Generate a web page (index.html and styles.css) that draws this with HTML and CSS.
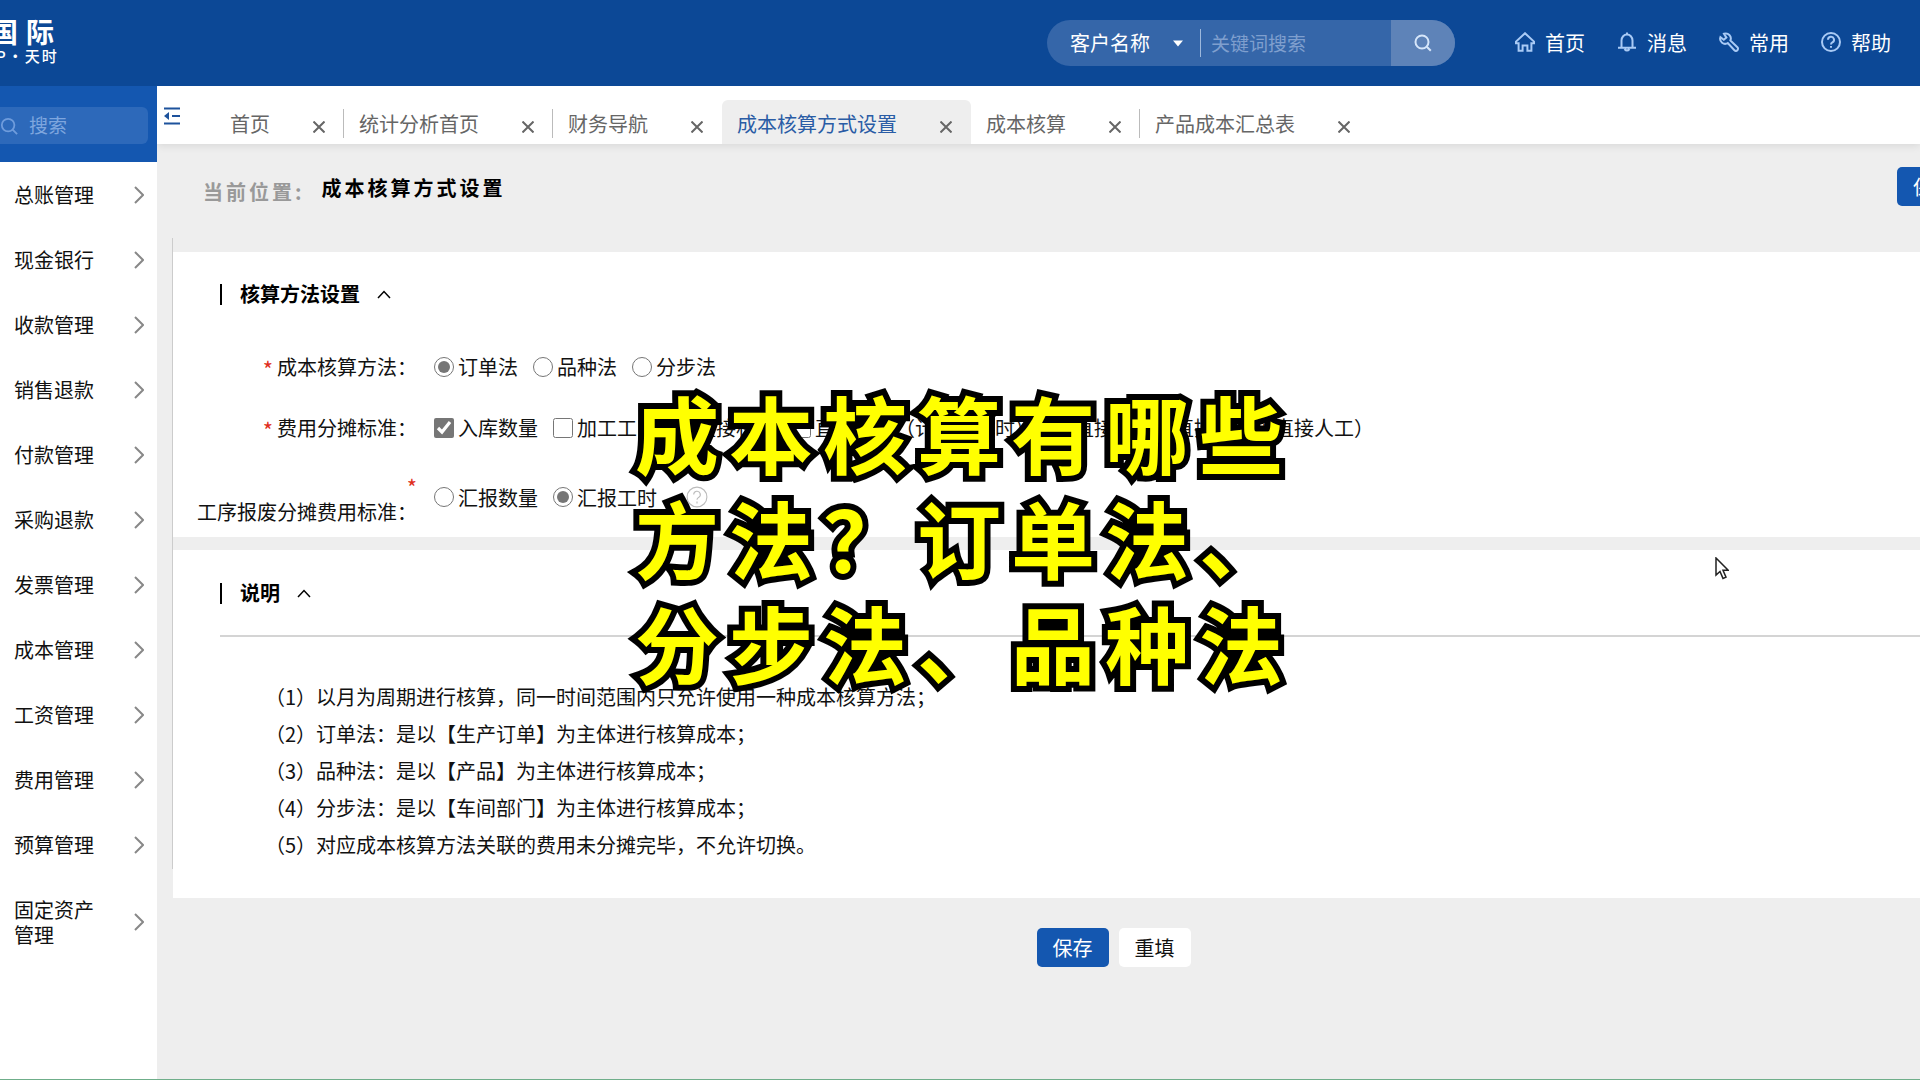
FILE: index.html
```html
<!DOCTYPE html>
<html lang="zh-CN">
<head>
<meta charset="utf-8">
<title>成本核算方式设置</title>
<link rel="stylesheet" href="styles.css">
</head>
<body>
<header class="topbar">
  <div class="brand">
    <div class="brand-name">国际</div>
    <div class="brand-sub">P·天时</div>
  </div>
  <form class="search">
    <select class="search-type" aria-label="搜索类型"><option>客户名称</option></select>
    <svg class="search-caret" viewBox="0 0 10 7"><path d="M0 .5h10L5 6.500z"/></svg>
    <input class="search-input" type="text" placeholder="关键词搜索" aria-label="关键词搜索">
    <button class="search-btn" type="button" aria-label="搜索">
      <svg class="icon" viewBox="0 0 20 20"><circle cx="9" cy="9" r="6.5"/><path d="M13.8 13.8l4 4"/></svg>
    </button>
  </form>
  <nav class="topnav">
    <a href="#"><svg class="icon" viewBox="0 0 20 20"><path d="M10 1.2L1 9.6v1.6h2.6v7.6h4v-5.4h4.8v5.4h4v-7.6H19V9.6z"/></svg>首页</a>
    <a href="#"><svg class="icon" viewBox="0 0 20 20"><path d="M10 .5v2M4.500 15V8.500a5.500 6 0 0 1 11 0V15M1 15.800h18M7.500 17q2.500 3 5 0"/></svg>消息</a>
    <a href="#"><svg class="icon" viewBox="0 0 20 20"><path d="M5 1.800a5 5 0 0 1 6.400 6.600l7 6.800a2 2 0 0 1-3 3l-6.600-7.200A5 5 0 0 1 1.400 5.200l3.400 2.600 2.600-2.200z"/></svg>常用</a>
    <a href="#"><svg class="icon" viewBox="0 0 20 20"><circle cx="10" cy="10" r="9"/><path d="M7 7.800a3 3 0 1 1 4.400 2.600q-1.400.8-1.400 2M10 14v1.800"/></svg>帮助</a>
  </nav>
</header>

<div class="layout">
  <aside class="sidebar">
    <div class="menu-search">
      <label class="menu-search-box">
        <svg class="icon" viewBox="0 0 20 20"><circle cx="9" cy="9" r="7"/><path d="M14 14l5 5"/></svg>
        <input type="text" placeholder="搜索" aria-label="搜索菜单">
      </label>
    </div>
    <nav class="menu">
      <a href="#"><span>总账管理</span><svg viewBox="0 0 10 18"><path d="M1 1l8 8-8 8"/></svg></a>
      <a href="#"><span>现金银行</span><svg viewBox="0 0 10 18"><path d="M1 1l8 8-8 8"/></svg></a>
      <a href="#"><span>收款管理</span><svg viewBox="0 0 10 18"><path d="M1 1l8 8-8 8"/></svg></a>
      <a href="#"><span>销售退款</span><svg viewBox="0 0 10 18"><path d="M1 1l8 8-8 8"/></svg></a>
      <a href="#"><span>付款管理</span><svg viewBox="0 0 10 18"><path d="M1 1l8 8-8 8"/></svg></a>
      <a href="#"><span>采购退款</span><svg viewBox="0 0 10 18"><path d="M1 1l8 8-8 8"/></svg></a>
      <a href="#"><span>发票管理</span><svg viewBox="0 0 10 18"><path d="M1 1l8 8-8 8"/></svg></a>
      <a href="#"><span>成本管理</span><svg viewBox="0 0 10 18"><path d="M1 1l8 8-8 8"/></svg></a>
      <a href="#"><span>工资管理</span><svg viewBox="0 0 10 18"><path d="M1 1l8 8-8 8"/></svg></a>
      <a href="#"><span>费用管理</span><svg viewBox="0 0 10 18"><path d="M1 1l8 8-8 8"/></svg></a>
      <a href="#"><span>预算管理</span><svg viewBox="0 0 10 18"><path d="M1 1l8 8-8 8"/></svg></a>
      <a href="#"><span>固定资产管理</span><svg viewBox="0 0 10 18"><path d="M1 1l8 8-8 8"/></svg></a>
    </nav>
  </aside>

  <main class="main">
    <div class="tabbar">
      <button class="collapse" type="button" aria-label="收起菜单">
        <svg viewBox="0 0 16 18"><path class="line" d="M0 1.500h16M8 9h8M0 16.500h16"/><path class="arrow" d="M0 9l5-4v8z"/></svg>
      </button>
      <div class="tabs">
        <div class="tab"><a href="#">首页</a><button type="button" aria-label="关闭"><svg viewBox="0 0 12 12"><path d="M.5.5l11 11M11.500.5l-11 11"/></svg></button></div>
        <div class="tab"><a href="#">统计分析首页</a><button type="button" aria-label="关闭"><svg viewBox="0 0 12 12"><path d="M.5.5l11 11M11.500.5l-11 11"/></svg></button></div>
        <div class="tab plain"><a href="#">财务导航</a><button type="button" aria-label="关闭"><svg viewBox="0 0 12 12"><path d="M.5.5l11 11M11.500.5l-11 11"/></svg></button></div>
        <div class="tab active"><a href="#">成本核算方式设置</a><button type="button" aria-label="关闭"><svg viewBox="0 0 12 12"><path d="M.5.5l11 11M11.500.5l-11 11"/></svg></button></div>
        <div class="tab"><a href="#">成本核算</a><button type="button" aria-label="关闭"><svg viewBox="0 0 12 12"><path d="M.5.5l11 11M11.500.5l-11 11"/></svg></button></div>
        <div class="tab plain"><a href="#">产品成本汇总表</a><button type="button" aria-label="关闭"><svg viewBox="0 0 12 12"><path d="M.5.5l11 11M11.500.5l-11 11"/></svg></button></div>
      </div>
    </div>

    <div class="canvas">
      <div class="location">
        <span class="location-label">当前位置:</span>
        <h1>成本核算方式设置</h1>
        <button class="btn primary" type="button">保存</button>
      </div>

      <form class="sheet">
        <section class="panel method">
          <h2>核算方法设置<svg viewBox="0 0 14 9"><path d="M1 8l6-6.500L13 8"/></svg></h2>
          <div class="field">
            <div class="field-label"><i>*</i><span>成本核算方法：</span></div>
            <div class="options">
              <label><input type="radio" name="method" checked>订单法</label>
              <label><input type="radio" name="method">品种法</label>
              <label><input type="radio" name="method">分步法</label>
            </div>
          </div>
          <div class="field">
            <div class="field-label"><i>*</i><span>费用分摊标准：</span></div>
            <div class="options">
              <label><input type="checkbox" checked>入库数量</label>
              <label><input type="checkbox">加工工时</label>
              <label><input type="checkbox">直接材料</label>
              <label><input type="checkbox">直接人工（计件、计时）</label>
              <label><input type="checkbox">直接成本（直接材料 + 直接人工）</label>
            </div>
          </div>
          <div class="field tall">
            <div class="field-label"><i>*</i><span>工序报废分摊费用标准：</span></div>
            <div class="options">
              <label><input type="radio" name="scrap">汇报数量</label>
              <label><input type="radio" name="scrap" checked>汇报工时</label>
              <svg class="icon hint" viewBox="0 0 20 20"><circle cx="10" cy="10" r="9"/><path d="M7 7.800a3 3 0 1 1 4.400 2.600q-1.400.8-1.400 2M10 14v1.800"/></svg>
            </div>
          </div>
        </section>

        <section class="panel notes">
          <h2>说明<svg viewBox="0 0 14 9"><path d="M1 8l6-6.500L13 8"/></svg></h2>
          <div class="notes-body">
            <p>（1）以月为周期进行核算，同一时间范围内只允许使用一种成本核算方法；</p>
            <p>（2）订单法：是以【生产订单】为主体进行核算成本；</p>
            <p>（3）品种法：是以【产品】为主体进行核算成本；</p>
            <p>（4）分步法：是以【车间部门】为主体进行核算成本；</p>
            <p>（5）对应成本核算方法关联的费用未分摊完毕，不允许切换。</p>
          </div>
        </section>

        <div class="actions">
          <button class="btn primary" type="button">保存</button>
          <button class="btn" type="reset">重填</button>
        </div>
      </form>
    </div>
  </main>
</div>

<div class="caption"><p>成本核算有哪些<br>方法？订单法、<br>分步法、品种法</p></div>
<svg class="cursor" viewBox="0 0 14 23"><path d="M1 1v17l4-3.600 3 7 3-1.300-3-6.800h5.200z"/></svg>
</body>
</html>
```
FILE: styles.css
```css
* { box-sizing: border-box; }

body {
  margin: 0;
  min-height: 100vh;
  display: flex;
  flex-direction: column;
  position: relative;
  overflow-x: hidden;
  background: #eee;
  border-bottom: 1px solid #6fae8a;
  color: #111;
  font: 20px/25px "Noto Sans CJK SC", sans-serif;
}

a { color: inherit; text-decoration: none; }
h1, h2, p { margin: 0; }
button, input, select { font: inherit; color: inherit; margin: 0; }
button { border: 0; padding: 0; background: none; }
svg { display: block; flex: none; fill: none; stroke: currentColor; }

.icon { width: 20px; height: 20px; stroke-width: 2; }

/* top bar */
.topbar {
  height: 86px;
  flex: none;
  display: flex;
  align-items: center;
  padding: 0 29px 2px 0;
  background: #0c4896;
  color: #fff;
}
.brand {
  margin-left: -10px;
  margin-right: auto;
  padding-bottom: 4px;
  white-space: nowrap;
}
.brand-name { font-size: 28px; line-height: 32px; font-weight: 700; letter-spacing: 8px; }
.brand-sub { padding-left: 6px; font-size: 15px; line-height: 18px; font-weight: 500; letter-spacing: 2px; }

.search {
  width: 408px;
  height: 46px;
  display: flex;
  align-items: center;
  margin-top: 2px;
  margin-right: 60px;
  padding-left: 23px;
  border-radius: 23px;
  overflow: hidden;
  background: #3566a9;
}
.search-type {
  appearance: none;
  width: 103px;
  padding: 0 0 2px;
  border: 0;
  background: transparent;
}
.search-caret { width: 10px; height: 7px; fill: #fff; stroke: none; }
.search-input {
  flex: 1;
  min-width: 0;
  height: 28px;
  margin-left: 17px;
  padding: 0 0 2px 10px;
  border: 0;
  border-left: 1px solid #9db8dc;
  background: transparent;
  font-size: 19px;
}
.search-input::placeholder { color: #7f9fce; opacity: 1; }
.search-btn {
  width: 64px;
  height: 46px;
  display: grid;
  place-items: center;
  background: #5e83b8;
  color: #d6e6fa;
}

.topnav { display: flex; gap: 32px; }
.topnav a { display: flex; align-items: center; gap: 10px; }
.topnav .icon { color: #a9caf5; }

/* side menu */
.layout { flex: 1; display: flex; }
.sidebar { width: 157px; flex: none; background: #fff; }
.menu-search { padding: 21px 9px 18px 0; background: #1457b0; }
.menu-search-box {
  height: 37px;
  display: flex;
  align-items: center;
  gap: 11px;
  border-radius: 0 6px 6px 0;
  background: #2d69ba;
  color: #6f9cdc;
}
.menu-search-box .icon { width: 18px; height: 18px; }
.menu-search-box input {
  width: 100px;
  padding: 0 0 2px;
  border: 0;
  background: transparent;
  font-size: 19px;
}
.menu-search-box input::placeholder { color: #7ea6de; opacity: 1; }
.menu a {
  display: flex;
  align-items: center;
  justify-content: space-between;
  padding: 20px 13px 20px 14px;
}
.menu span { width: 84px; }
.menu svg { width: 10px; height: 18px; color: #888; stroke-width: 2; }

/* page tabs */
.main { flex: 1; min-width: 0; overflow: hidden; }
.tabbar {
  height: 58px;
  display: flex;
  align-items: flex-end;
  background: #fff;
  box-shadow: 0 2px 8px rgba(0, 0, 0, .09);
}
.collapse { align-self: flex-start; margin: 21px 35px 0 7px; }
.collapse svg { width: 16px; height: 18px; color: #1d529c; stroke-width: 2; }
.collapse .arrow { fill: #1d529c; stroke: none; }
.tabs { display: flex; }
.tab {
  height: 44px;
  display: flex;
  align-items: center;
  gap: 43px;
  padding: 2px 19px 0 15px;
  border-radius: 6px 6px 0 0;
  color: #666;
  white-space: nowrap;
  background: linear-gradient(#bbb, #bbb) right 9px / 1px 29px no-repeat;
}
.tab.plain { background: none; }
.tab.active { background: #eee; color: #2a5ca5; }
.tab button { padding-top: 8px; color: #666; }
.tab button svg { width: 12px; height: 12px; stroke-width: 2; }

/* the working area runs on past the right edge of the window */
.canvas { margin-right: -137px; padding-left: 15px; }
.location {
  height: 94px;
  display: flex;
  align-items: flex-start;
  padding: 23px 88px 0 31px;
}
.location-label {
  padding-top: 12px;
  color: #999;
  font-weight: 700;
  letter-spacing: 3px;
}
.location h1 {
  margin: 8px auto 0 17px;
  color: #000;
  font-size: 20px;
  line-height: 25px;
  letter-spacing: 3px;
}

.btn {
  width: 72px;
  height: 39px;
  padding-bottom: 1px;
  border-radius: 5px;
  background: #fff;
}
.btn.primary { background: #1457b0; color: #fff; }

.sheet {
  padding-top: 14px;
  background: linear-gradient(#ccc, #ccc) left top / 1px 631px no-repeat;
}

.panel { margin-left: 1px; background: #fff; }
.panel h2 {
  display: flex;
  align-items: center;
  color: #000;
  font-size: 20px;
  line-height: 24px;
}
.panel h2::before {
  content: "";
  width: 2px;
  height: 21px;
  margin-right: 18px;
  background: #000;
}
.panel h2 svg { width: 14px; height: 9px; margin-left: 17px; stroke-width: 1.5; }

.method { padding: 30px 0 13px 47px; }
.field { display: flex; align-items: center; margin-left: -23px; }
.method h2 + .field { margin-top: 48px; }
.field + .field { margin-top: 36px; }
.field + .field.tall { margin-top: 30px; }
.field-label {
  width: 220px;
  flex: none;
  display: flex;
  flex-wrap: wrap;
  justify-content: flex-end;
  column-gap: 4px;
}
.field-label i { color: #e03020; font-size: 22px; font-style: normal; line-height: 25px; padding-top: 2px; margin-bottom: -2px; }
.tall .field-label { padding-top: 4px; }
.tall .field-label i { padding: 0 0 2px; }
.options { display: flex; align-items: center; gap: 15px; margin-left: 17px; white-space: nowrap; }
.options label { display: flex; align-items: center; gap: 4px; }
.options input { width: 20px; height: 20px; accent-color: #767676; }
.hint { width: 22px; height: 22px; margin-left: 14px; color: #bbb; stroke-width: 1; }

.notes { margin-top: 13px; padding: 31px 0 35px 47px; }
.notes-body {
  margin-top: 30px;
  padding: 41px 0 0 45px;
  border-top: 2px solid #d4d4d4;
}
.notes-body p { line-height: 37px; }

.actions { display: flex; justify-content: center; gap: 10px; padding: 30px 2px 31px 0; }

/* video caption and pointer */
.caption {
  position: absolute;
  inset: 0;
  display: grid;
  place-items: center;
  padding: 0 0 6px 8px;
  pointer-events: none;
}
.caption p {
  color: #ff0;
  font-size: 84px;
  line-height: 105px;
  font-weight: 700;
  letter-spacing: 10px;
  -webkit-text-stroke: 12px #000;
  paint-order: stroke fill;
  stroke-linejoin: round;
}
.cursor {
  position: absolute;
  left: 1715px;
  top: 557px;
  width: 14px;
  height: 23px;
  fill: #fff;
  stroke: #222;
  stroke-width: 1.5;
}
```
